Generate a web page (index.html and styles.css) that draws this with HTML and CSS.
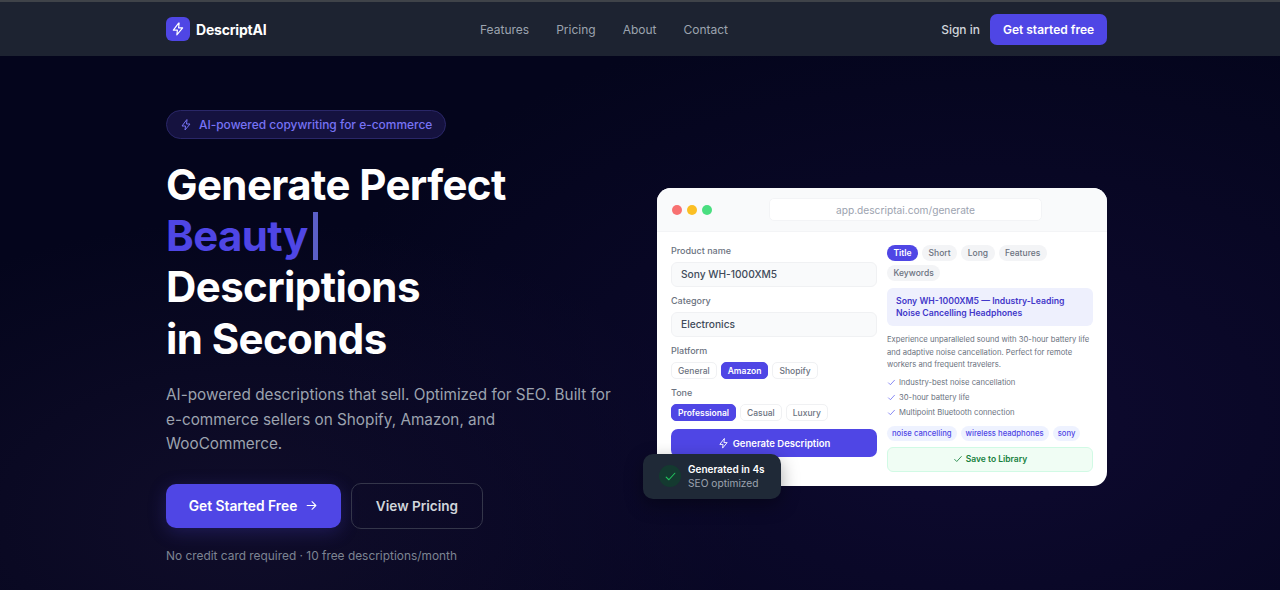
FILE: index.html
```html
<!DOCTYPE html>
<html>
<head>
    <meta charset="utf-8">
    <title>DescriptAI</title>
    <link rel="stylesheet" href="styles.css">
</head>
<body>
    <svg width="0" height="0" class="defs">
        <symbol id="bolt" viewBox="0 0 24 24"><path d="M13 2 4 14h7l-1 8 10-12h-7l1-8z" fill="none" stroke="currentColor" stroke-width="2" stroke-linejoin="round" stroke-linecap="round"/></symbol>
        <symbol id="check" viewBox="0 0 24 24"><path d="M4 13l5 5L20 6" fill="none" stroke="currentColor" stroke-width="2" stroke-linecap="round" stroke-linejoin="round"/></symbol>
        <symbol id="arrow" viewBox="0 0 24 24"><path d="M4 12h16M13 5l7 7-7 7" fill="none" stroke="currentColor" stroke-width="2" stroke-linecap="round" stroke-linejoin="round"/></symbol>
    </svg>

    <header class="topbar">
        <div class="container topbar-inner">
            <a class="logo">
                <span class="logo-mark"><svg class="icon-14"><use href="#bolt"/></svg></span>
                <span class="logo-text">DescriptAI</span>
            </a>
            <nav class="nav">
                <a>Features</a>
                <a>Pricing</a>
                <a>About</a>
                <a>Contact</a>
            </nav>
            <div class="topbar-actions">
                <a class="signin">Sign in</a>
                <a class="btn-small">Get started free</a>
            </div>
        </div>
    </header>

    <main class="container hero">
        <section class="hero-left">
            <div class="pill"><svg class="icon-12"><use href="#bolt"/></svg>AI-powered copywriting for e-commerce</div>
            <h1>Generate Perfect<br><span class="accent">Beauty</span><span class="caret"></span><br>Descriptions<br>in Seconds</h1>
            <p class="lead">AI-powered descriptions that sell. Optimized for SEO. Built for e-commerce sellers on Shopify, Amazon, and WooCommerce.</p>
            <div class="cta-row">
                <a class="btn-primary">Get Started Free<svg class="icon-13"><use href="#arrow"/></svg></a>
                <a class="btn-ghost">View Pricing</a>
            </div>
            <p class="fineprint">No credit card required · 10 free descriptions/month</p>
        </section>

        <section class="hero-right">
            <div class="card">
                <div class="card-bar">
                    <span class="dot dot-red"></span>
                    <span class="dot dot-yellow"></span>
                    <span class="dot dot-green"></span>
                    <div class="url">app.descriptai.com/generate</div>
                </div>
                <div class="card-body">
                    <div class="form-col">
                        <div class="field-label">Product name</div>
                        <div class="field">Sony WH-1000XM5</div>
                        <div class="field-label">Category</div>
                        <div class="field">Electronics</div>
                        <div class="field-label">Platform</div>
                        <div class="opts">
                            <span class="opt">General</span>
                            <span class="opt opt-on">Amazon</span>
                            <span class="opt">Shopify</span>
                        </div>
                        <div class="field-label">Tone</div>
                        <div class="opts">
                            <span class="opt opt-on">Professional</span>
                            <span class="opt">Casual</span>
                            <span class="opt">Luxury</span>
                        </div>
                        <div class="generate"><svg class="icon-11"><use href="#bolt"/></svg>Generate Description</div>
                    </div>
                    <div class="result-col">
                        <div class="tabs">
                            <span class="tab tab-on">Title</span>
                            <span class="tab">Short</span>
                            <span class="tab">Long</span>
                            <span class="tab">Features</span>
                            <span class="tab">Keywords</span>
                        </div>
                        <div class="title-box">Sony WH-1000XM5 — Industry-Leading Noise Cancelling Headphones</div>
                        <p class="desc">Experience unparalleled sound with 30-hour battery life and adaptive noise cancellation. Perfect for remote workers and frequent travelers.</p>
                        <ul class="checks">
                            <li><svg class="icon-9"><use href="#check"/></svg>Industry-best noise cancellation</li>
                            <li><svg class="icon-9"><use href="#check"/></svg>30-hour battery life</li>
                            <li><svg class="icon-9"><use href="#check"/></svg>Multipoint Bluetooth connection</li>
                        </ul>
                        <div class="tags">
                            <span class="tag">noise cancelling</span>
                            <span class="tag">wireless headphones</span>
                            <span class="tag">sony</span>
                        </div>
                        <div class="save"><svg class="icon-10"><use href="#check"/></svg>Save to Library</div>
                    </div>
                </div>
            </div>
            <div class="toast">
                <span class="toast-icon"><svg class="icon-13"><use href="#check"/></svg></span>
                <div>
                    <div class="toast-title">Generated in 4s</div>
                    <div class="toast-sub">SEO optimized</div>
                </div>
            </div>
        </section>
    </main>
</body>
</html>
```

FILE: styles.css
```css
* {
    box-sizing: border-box;
}
html, body {
    height: 100%;
}
body {
    margin: 0;
    height: 590px;
    overflow: hidden;
    font-family: Inter, "Noto Sans", sans-serif;
    background: radial-gradient(ellipse 700px 420px at 980px 420px, #0e0a30 0%, rgba(14, 10, 48, 0) 100%), radial-gradient(ellipse 500px 300px at 250px 520px, #100d2a 0%, rgba(16, 13, 42, 0) 100%), #04051c;
    color: #fff;
}
a {
    text-decoration: none;
}
.defs {
    display: block;
    height: 0;
}
.container {
    width: 941px;
    margin-left: 166px;
}
.icon-9 { width: 9px; height: 9px; flex: none; }
.icon-10 { width: 10px; height: 10px; flex: none; }
.icon-11 { width: 11px; height: 11px; flex: none; }
.icon-12 { width: 12px; height: 12px; flex: none; }
.icon-13 { width: 13px; height: 13px; flex: none; }
.icon-14 { width: 14px; height: 14px; flex: none; }

/* top bar */
.topbar {
    height: 56px;
    background: #1d2331;
    border-top: 2px solid #3f4349;
}
.topbar-inner {
    height: 54px;
    display: flex;
    align-items: center;
}
.logo {
    display: flex;
    align-items: center;
    gap: 6px;
    width: 314px;
}
.logo-mark {
    width: 24px;
    height: 24px;
    border-radius: 6px;
    background: #4f46e5;
    display: flex;
    align-items: center;
    justify-content: center;
}
.logo-text {
    font-size: 14px;
    font-weight: 700;
    letter-spacing: -0.2px;
}
.nav {
    display: flex;
    gap: 27px;
    font-size: 12px;
    color: #9ca3af;
}
.topbar-actions {
    margin-left: auto;
    display: flex;
    align-items: center;
    gap: 10px;
}
.signin {
    font-size: 12px;
    font-weight: 500;
    color: #d1d5db;
}
.btn-small {
    height: 31px;
    width: 117px;
    border-radius: 7px;
    background: #4f46e5;
    font-size: 12px;
    font-weight: 600;
    display: flex;
    align-items: center;
    justify-content: center;
}

/* hero */
.hero {
    display: grid;
    grid-template-columns: 1fr 450px;
    column-gap: 45px;
}
.hero-left {
    padding-top: 54px;
}
.pill {
    display: inline-flex;
    align-items: center;
    gap: 7px;
    height: 29px;
    padding: 0 13px;
    border-radius: 15px;
    border: 1px solid #2a2768;
    background: #15123f;
    color: #7773f5;
    font-size: 11.95px;
    font-weight: 500;
    vertical-align: top;
}
h1 {
    margin: 20px 0 0;
    font-size: 42px;
    line-height: 51.2px;
    font-weight: 700;
    letter-spacing: -0.6px;
}
.accent {
    color: #4f46e5;
}
.caret {
    display: inline-block;
    width: 5.5px;
    height: 48px;
    margin-left: 5px;
    background: #5b5fc7;
    vertical-align: -9px;
}
.lead {
    margin: 19px 0 0;
    font-size: 15.3px;
    line-height: 24.7px;
    color: #9ca3af;
}
.cta-row {
    display: flex;
    align-items: flex-start;
    gap: 10px;
    margin-top: 27px;
}
.btn-primary {
    width: 175px;
    height: 44px;
    border-radius: 10px;
    background: #4f46e5;
    box-shadow: 0 4px 18px rgba(79, 70, 229, 0.25);
    color: #fff;
    font-size: 13.8px;
    font-weight: 600;
    display: flex;
    align-items: center;
    justify-content: center;
    gap: 8px;
}
.btn-ghost {
    width: 132px;
    height: 46px;
    margin-top: -1px;
    border-radius: 10px;
    border: 1px solid #34364a;
    color: #d1d5db;
    font-size: 13.6px;
    font-weight: 600;
    display: flex;
    align-items: center;
    justify-content: center;
}
.fineprint {
    margin: 19px 0 0;
    font-size: 11.9px;
    color: #7d8492;
}

/* product card */
.hero-right {
    position: relative;
    padding-top: 132px;
}
.card {
    height: 298px;
    background: #fff;
    border-radius: 14px;
    color: #414b5a;
    overflow: hidden;
}
.card-bar {
    height: 44px;
    background: #f9fafb;
    border-bottom: 1px solid #f3f4f6;
    padding-left: 15px;
    display: flex;
    align-items: center;
    gap: 5px;
}
.dot {
    width: 10px;
    height: 10px;
    border-radius: 50%;
}
.dot-red { background: #f87171; }
.dot-yellow { background: #fbbf24; }
.dot-green { background: #4ade80; }
.url {
    width: 273px;
    height: 23px;
    margin-left: 52px;
    border-radius: 5px;
    border: 1px solid #f3f4f6;
    background: #fff;
    color: #9ca3af;
    font-size: 10.2px;
    display: flex;
    align-items: center;
    justify-content: center;
}
.card-body {
    display: grid;
    grid-template-columns: 206px 206px;
    column-gap: 10px;
    padding: 13px 14px 0;
}
.field-label {
    font-size: 9px;
    font-weight: 500;
    color: #6b7280;
    line-height: 11px;
    margin-bottom: 6px;
}
.field {
    height: 25px;
    padding: 0 9px 1px;
    margin-bottom: 8px;
    border-radius: 6px;
    border: 1px solid #f0f1f3;
    background: #f9fafb;
    font-size: 10.2px;
    font-weight: 500;
    display: flex;
    align-items: center;
}
.opts {
    display: flex;
    gap: 4px;
    margin-bottom: 8px;
}
.opt {
    height: 17px;
    padding: 0 6px;
    border-radius: 5px;
    border: 1px solid #f0f1f3;
    color: #6b7280;
    font-size: 8.5px;
    font-weight: 500;
    display: flex;
    align-items: center;
}
.opt-on {
    background: #4f46e5;
    border-color: #4f46e5;
    color: #fff;
    font-weight: 600;
}
.generate {
    height: 28px;
    border-radius: 7px;
    background: #4f46e5;
    color: #fff;
    font-size: 9.5px;
    font-weight: 600;
    display: flex;
    align-items: center;
    justify-content: center;
    gap: 4px;
}
.tabs {
    display: flex;
    flex-wrap: wrap;
    gap: 4px 4px;
}
.tab {
    height: 16px;
    padding: 0 6.5px;
    border-radius: 8px;
    background: #f3f4f6;
    color: #6b7280;
    font-size: 8.5px;
    font-weight: 500;
    display: flex;
    align-items: center;
}
.tab-on {
    background: #4f46e5;
    color: #fff;
    font-weight: 600;
}
.title-box {
    margin-top: 7px;
    height: 38px;
    padding: 0 9px;
    border-radius: 6px;
    background: #eef0fd;
    color: #4338ca;
    font-size: 8.7px;
    font-weight: 600;
    line-height: 12px;
    display: flex;
    align-items: center;
}
.desc {
    margin: 8px 0 0;
    font-size: 7.7px;
    line-height: 12.7px;
    color: #6b7280;
}
.checks {
    list-style: none;
    margin: 3px 0 0;
    padding: 0;
}
.checks li {
    display: flex;
    align-items: center;
    gap: 3px;
    height: 15px;
    font-size: 7.7px;
    color: #6b7280;
}
.checks svg {
    color: #6366f1;
}
.tags {
    display: flex;
    gap: 4px;
    margin-top: 5.5px;
}
.tag {
    height: 15px;
    padding: 0 5px;
    border-radius: 8px;
    background: #eef2ff;
    color: #4f46e5;
    font-size: 7.7px;
    font-weight: 500;
    white-space: nowrap;
    display: flex;
    align-items: center;
}
.save {
    height: 25px;
    margin-top: 6px;
    border-radius: 6px;
    border: 1px solid #d1fae5;
    background: #f0fdf4;
    color: #15803d;
    font-size: 8.5px;
    font-weight: 600;
    display: flex;
    align-items: center;
    justify-content: center;
    gap: 3px;
}

/* floating toast */
.toast {
    position: absolute;
    left: -14px;
    top: 398px;
    width: 138px;
    height: 45px;
    border-radius: 10px;
    background: #1f2937;
    box-shadow: 0 6px 18px rgba(0, 0, 0, 0.35);
    display: flex;
    align-items: center;
    gap: 7px;
    padding: 0 0 1px 16px;
}
.toast-icon {
    width: 22px;
    height: 22px;
    border-radius: 50%;
    background: #143a30;
    color: #22c55e;
    display: flex;
    align-items: center;
    justify-content: center;
}
.toast-title {
    font-size: 10px;
    font-weight: 600;
    line-height: 14px;
}
.toast-sub {
    font-size: 10.2px;
    line-height: 14px;
    color: #9ca3af;
}
```
